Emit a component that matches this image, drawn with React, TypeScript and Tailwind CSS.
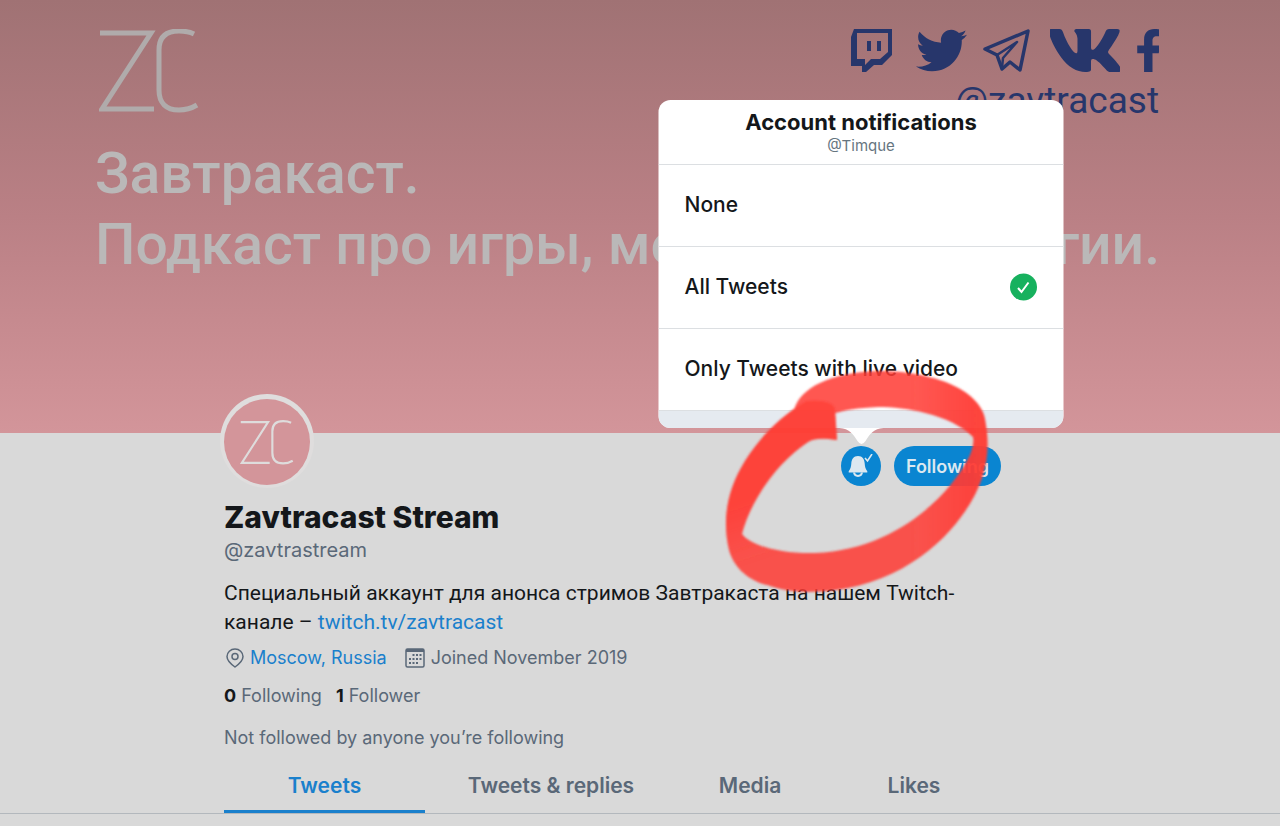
import { useState } from "react";
import { FaFacebookF, FaTwitter, FaVk } from "react-icons/fa";

const OPTIONS = ["None", "All Tweets", "Only Tweets with live video"];

const TABS = [
    { label: "Tweets", width: "w-[201px]" },
    { label: "Tweets & replies", width: "w-[252px]" },
    { label: "Media", width: "w-[146px]" },
    { label: "Likes", width: "w-[182px]" },
];

const MARKER_RING = "M794 410C800 388 830 372 880 371C930 371 985 389 986 425C991 455 985 485 961 517C934 554 882 592 808 592C773 592 740 578 731 553L742 534C752 547 785 554 815 553C895 550 950 496 970 455C973 447 974 442 973 437C950 414 905 407 878 407C858 408 845 410 836 413Z";
const MARKER_ARM = "M806 401C820 399 835 402 835 409L837 440C823 438 814 438 808 442C780 460 751 498 742 534C750 545 765 550 790 553C785 570 768 585 766 585C745 579 733 565 729 550C722 520 727 490 745 461C762 434 783 415 806 401Z";

function LogoMark({ className, strokeWidth }: { className: string; strokeWidth: number }) {
    return (
        <svg viewBox="0 0 100 84" fill="none" stroke="currentColor" strokeWidth={strokeWidth} className={className} role="img" aria-label="ZC">
            <path d="M1 4H52L3 80H55" />
            <path d="M95 5C91 3 86 2 80 2C66 2 60 9 60 21V61C60 74 67 81 80 81C87 81 93 79 98 76" />
        </svg>
    );
}

function TwitchIcon() {
    return (
        <svg viewBox="0 0 41 43" className="w-[41px] h-[43px]" fill="currentColor" aria-hidden="true">
            <path fillRule="evenodd" d="M3 0H41V26L31 36H23L15 43H11V37H0V8ZM6 4V30H14V36L20 30H29L37 23V4Z" />
            <path d="M16 12H20V22H16ZM26 12H30V22H26Z" />
        </svg>
    );
}

function TelegramIcon() {
    return (
        <svg viewBox="0 0 47 43" className="w-[47px] h-[43px]" fill="none" stroke="currentColor" strokeWidth="3.5" strokeLinejoin="round" strokeLinecap="round" aria-hidden="true">
            <path d="M2 20L45 2L37 41L27 33L19 40L14 26Z" />
            <path d="M14 26L34 13L20 29L19 39" strokeWidth="2.5" />
        </svg>
    );
}

function BellIcon() {
    return (
        <svg viewBox="0 0 28 24" className="w-7 h-6" fill="none" aria-hidden="true">
            <path fill="currentColor" d="M11 2C6.500 2 4.500 5.500 4.300 9.500C4.100 13 3.500 14.500 1.700 17.300V18.500H20.300V17.300C18.500 14.500 17.900 13 17.700 9.500C17.500 5.500 15.500 2 11 2Z" />
            <path stroke="currentColor" strokeWidth="2" d="M7 18.500C7.500 23 14.500 23 15 18.500" />
            <path stroke="currentColor" strokeWidth="1.600" d="M18 4L20.500 7L25 0" />
        </svg>
    );
}

function PinIcon() {
    return (
        <svg viewBox="0 0 18 20" className="w-[18px] h-5" fill="none" stroke="currentColor" strokeWidth="1.500" aria-hidden="true">
            <path d="M9 19C5.500 16.500 1 13 1 8.500A8 7.500 0 0 1 17 8.500C17 13 12.500 16.500 9 19Z" />
            <circle cx="9" cy="8.500" r="3" />
        </svg>
    );
}

function CalendarIcon() {
    return (
        <svg viewBox="0 0 20 20" className="w-5 h-5" fill="none" stroke="currentColor" aria-hidden="true">
            <rect x="1" y="1" width="18" height="18" rx="1.500" strokeWidth="1.500" />
            <path d="M1 2.500H19" strokeWidth="3" />
            <path d="M7.500 7H17M4 11H17M4 15H13" strokeWidth="2" strokeDasharray="2 1.500" />
        </svg>
    );
}

function MarkerCircle() {
    return (
        <svg viewBox="720 365 275 235" className="absolute left-[-121px] top-[-81px] w-[275px] h-[235px] max-w-none z-20 pointer-events-none" aria-hidden="true">
            <defs>
                <filter id="soft" x="-5%" y="-5%" width="110%" height="110%">
                    <feGaussianBlur stdDeviation="1" />
                </filter>
                <linearGradient id="ring" x1="0" y1="0" x2="1" y2="0">
                    <stop offset="0" stopOpacity="0.850" stopColor="#ff3b34" />
                    <stop offset="0.700" stopOpacity="0.850" stopColor="#ff3b34" />
                    <stop offset="0.880" stopOpacity="0.920" stopColor="#ff3b34" />
                    <stop offset="1" stopOpacity="0.960" stopColor="#ff3b34" />
                </linearGradient>
                <linearGradient id="arm" gradientUnits="userSpaceOnUse" x1="745" y1="500" x2="765" y2="560">
                    <stop offset="0" stopOpacity="0.700" stopColor="#ff3b34" />
                    <stop offset="1" stopOpacity="0" stopColor="#ff3b34" />
                </linearGradient>
            </defs>
            <g filter="url(#soft)">
                <path fill="url(#ring)" d={MARKER_RING + MARKER_ARM} />
                <path fill="url(#arm)" d={MARKER_ARM} />
            </g>
        </svg>
    );
}

function NotificationsPopover() {
    const [selected, setSelected] = useState("All Tweets");

    return (
        <div role="dialog" aria-label="Account notifications" className="absolute bottom-full left-1/2 -translate-x-1/2 z-10 w-[405px] pb-[18px]">
            <div className="bg-white rounded-xl overflow-hidden">
                <div className="h-[65px] flex flex-col items-center justify-center border-b border-[#dcdfe2]">
                    <h2 className="text-[22px] leading-7 font-bold text-[#14171a]">Account notifications</h2>
                    <p className="text-[15px] leading-5 text-[#66757f]">@Timque</p>
                </div>
                {OPTIONS.map((option) => (
                    <button
                        key={option}
                        onClick={() => setSelected(option)}
                        className="w-full h-[82px] px-[26px] pb-px flex items-center justify-between text-left text-[21px] font-medium text-[#14171a] border-b border-[#dcdfe2]"
                    >
                        {option}
                        {selected === option && (
                            <svg viewBox="0 0 28 28" className="w-7 h-7" aria-hidden="true">
                                <circle cx="14" cy="14" r="13.500" fill="#17b15e" />
                                <path d="M8.500 15L12 19L19 9.500" fill="none" stroke="white" strokeWidth="2" />
                            </svg>
                        )}
                    </button>
                ))}
                <div className="h-[17px] bg-[#e5eaf0]" />
            </div>
            <svg viewBox="0 0 44 17" className="absolute bottom-px left-1/2 -translate-x-1/2 w-11 h-[17px]" fill="white" aria-hidden="true">
                <path d="M0 0H44C34 1 31 5 26 13Q22 19 18 13C13 5 10 1 0 0Z" />
            </svg>
        </div>
    );
}

function Banner() {
    return (
        <header className="h-[433px] pt-[29px] pl-[95px] pr-[121px] bg-linear-to-b from-[#a07274] via-[#ba8085] to-[#d3959a] font-['Roboto',sans-serif]">
            <div className="flex justify-between items-start text-[#27366b]">
                <LogoMark className="w-[100px] h-[84px] ml-1 text-[#b0abab]" strokeWidth={5} />
                <div className="flex flex-col items-end">
                    <div className="flex items-center">
                        <TwitchIcon />
                        <FaTwitter className="w-[51px] h-[51px] -my-1 ml-6" />
                        <span className="ml-4"><TelegramIcon /></span>
                        <FaVk viewBox="30 96 517 320" className="w-[70px] h-[43px] ml-5" />
                        <FaFacebookF viewBox="22 0 258 512" className="w-[22px] h-[43px] ml-[17px]" />
                    </div>
                    <p className="mt-2 text-[37px] leading-[42px]">@zavtracast</p>
                </div>
            </div>
            <p className="mt-4 text-[57px] leading-[71px] font-medium whitespace-nowrap text-[#bab8b8]">
                Завтракаст.
                <br />
                Подкаст про игры, медиа и технологии.
            </p>
        </header>
    );
}

export default function App() {
    const [tab, setTab] = useState("Tweets");

    return (
        <div className="min-h-screen overflow-hidden bg-[#d9d9d9] text-[#14171a] font-['Inter',sans-serif]">
            <Banner />
            <main className="ml-56">
                <div className="w-[777px] max-w-full">
                    <div className="flex items-start justify-between h-[67px]">
                        <div className="-mt-[39px] -ml-1 w-[94px] h-[94px] rounded-full bg-[#dfdddd] p-1 pt-[5px] shrink-0">
                            <div className="w-[86px] h-[86px] rounded-full bg-[#d3959a] flex items-center justify-center">
                                <LogoMark className="w-[54px] h-[45px] text-[#dedcdc]" strokeWidth={4} />
                            </div>
                        </div>
                        <div className="flex gap-[13px] mt-[13px]">
                            <div className="relative">
                                <button aria-label="Notifications" className="w-10 h-10 rounded-full bg-[#0a85d1] text-[#dce8f0] flex items-center justify-center">
                                    <BellIcon />
                                </button>
                                <NotificationsPopover />
                                <MarkerCircle />
                            </div>
                            <button className="w-[107px] h-10 rounded-full bg-[#0a85d1] text-[#dce8f0] text-[18px] font-semibold">Following</button>
                        </div>
                    </div>
                    <h1 className="text-[30px] leading-[34px] font-extrabold">Zavtracast Stream</h1>
                    <p className="text-[20px] leading-8 text-[#5a6878]">@zavtrastream</p>
                    <p className="mt-[13px] text-[21px] leading-[29px] font-['Roboto',sans-serif]">
                        Специальный аккаунт для анонса стримов Завтракаста на нашем Twitch-
                        <br />
                        канале – <a href="#twitch" className="text-[#1a80cc]">twitch.tv/zavtracast</a>
                    </p>
                    <div className="mt-1 flex items-center text-[18px] leading-[34px] text-[#5a6878]">
                        <span className="ml-[2px] mr-[6px]"><PinIcon /></span>
                        <a href="#moscow" className="text-[#1a80cc]">Moscow, Russia</a>
                        <span className="ml-[18px] mr-[6px]"><CalendarIcon /></span>
                        <span>Joined November 2019</span>
                    </div>
                    <div className="mt-1 flex gap-[14px] text-[18px] leading-[34px] text-[#5a6878]">
                        <a href="#following"><b className="font-bold text-[#14171a]">0</b> Following</a>
                        <a href="#followers"><b className="font-bold text-[#14171a]">1</b> Follower</a>
                    </div>
                    <p className="mt-2 text-[18px] leading-[34px] text-[#5a6878]">Not followed by anyone you’re following</p>
                </div>
            </main>
            <nav className="mt-1 pl-56 flex border-b border-[#b3b8bd]">
                {TABS.map(({ label, width }) => (
                    <button
                        key={label}
                        onClick={() => setTab(label)}
                        className={`${width} h-[54px] pt-[3px] text-[21px] font-semibold border-b-3 ${tab === label ? "text-[#1a80cc] border-[#1a80cc]" : "text-[#5a6878] border-transparent"}`}
                    >
                        {label}
                    </button>
                ))}
            </nav>
        </div>
    );
}
